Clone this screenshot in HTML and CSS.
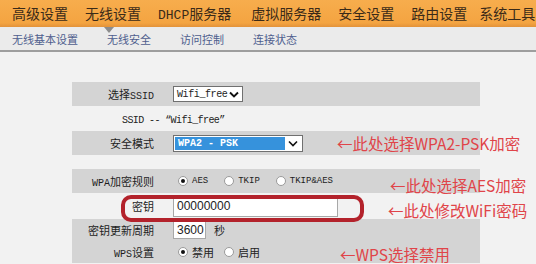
FILE: index.html
```html
<!DOCTYPE html>
<html lang="zh-CN">
<head>
    <meta charset="UTF-8">
    <meta name="viewport" content="width=device-width, initial-scale=1.0">
    <title>无线安全设置</title>
    <link rel="stylesheet" href="styles.css">
</head>
<body>

<div class="topnav">
    <span class="tab">高级设置</span>
    <span class="tab">无线设置</span>
    <span class="tab"><span class="en">DHCP</span>服务器</span>
    <span class="tab">虚拟服务器</span>
    <span class="tab">安全设置</span>
    <span class="tab">路由设置</span>
    <span class="tab">系统工具</span>
</div>

<div class="subnav">
    <span class="pointer"></span>
    <span class="sub">无线基本设置</span>
    <span class="sub">无线安全</span>
    <span class="sub">访问控制</span>
    <span class="sub">连接状态</span>
</div>

<div class="main">
    <div class="panel">
        <div class="row dark">
            <span class="label">选择<span class="en">SSID</span></span>
            <span class="select ssid">Wifi_free
                <svg class="chevron" width="10" height="7" viewBox="0 0 10 7"><path d="M1 1.5 L5 5.5 L9 1.5" fill="none" stroke="#111" stroke-width="1.9"/></svg>
            </span>
        </div>
        <div class="row info">
            <span class="ssid-name">SSID -- “Wifi_free”</span>
        </div>
        <div class="row dark">
            <span class="label">安全模式</span>
            <span class="select mode">
                <span class="mode-value">WPA2 - PSK</span>
                <span class="mode-arrow">
                    <svg width="10" height="7" viewBox="0 0 10 7"><path d="M1 1.5 L5 5.5 L9 1.5" fill="none" stroke="#111" stroke-width="1.6"/></svg>
                </span>
            </span>
        </div>
        <div class="spacer"></div>
        <div class="row dark">
            <span class="label"><span class="en">WPA</span>加密规则</span>
            <span class="options">
                <span class="option"><span class="radio on"></span><span class="en">AES</span></span>
                <span class="option"><span class="radio"></span><span class="en">TKIP</span></span>
                <span class="option"><span class="radio"></span><span class="en">TKIP&amp;AES</span></span>
            </span>
        </div>
        <div class="row key">
            <span class="label">密钥</span>
            <span class="input key-input">00000000</span>
        </div>
        <div class="row dark short">
            <span class="label">密钥更新周期</span>
            <span class="field"><span class="input period">3600</span><span class="unit">秒</span></span>
        </div>
        <div class="row dark short">
            <span class="label"><span class="en">WPS</span>设置</span>
            <span class="options tight">
                <span class="option"><span class="radio on"></span>禁用</span>
                <span class="option"><span class="radio"></span>启用</span>
            </span>
        </div>
    </div>

    <div class="mark"></div>
    <div class="note note-mode">←此处选择WPA2-PSK加密</div>
    <div class="note note-aes">←此处选择AES加密</div>
    <div class="note note-key">←此处修改WiFi密码</div>
    <div class="note note-wps">←WPS选择禁用</div>
</div>

</body>
</html>
```

FILE: styles.css
```css
body {
    margin: 0;
    width: 536px;
    height: 264px;
    overflow: hidden;
    background-color: #f2f2f2;
    font-family: "Noto Sans CJK SC", sans-serif;
    color: #222;
}

.en {
    font-family: "Liberation Mono", monospace;
}

/* orange main menu */
.topnav {
    display: flex;
    gap: 17px;
    height: 27px;
    padding-left: 12px;
    background: linear-gradient(#f7ad4d, #f4a441 85%, #e2923a);
    font-size: 14px;
    line-height: 27px;
    color: #3a2a18;
    white-space: nowrap;
    overflow: hidden;
}

.topnav .en {
    font-size: 13px;
}

.topnav .tab:nth-child(4) {
    margin-left: 3px;
}

.topnav .tab:last-child {
    margin-left: -5px;
}

/* grey sub menu */
.subnav {
    position: relative;
    display: flex;
    gap: 29px;
    height: 23px;
    padding-left: 12px;
    background-color: #ebebeb;
    border-bottom: 2px solid #9e9e9e;
    font-size: 11px;
    line-height: 24px;
    color: #4f5e8e;
}

.subnav .pointer {
    position: absolute;
    left: 104px;
    top: 0;
    border-left: 5px solid transparent;
    border-right: 5px solid transparent;
    border-top: 6px solid #8c8c8c;
}

.main {
    position: relative;
    padding: 30px 0 0 72px;
}

.panel {
    width: 408px;
}

.row {
    display: grid;
    grid-template-columns: 82px 1fr;
    column-gap: 19px;
    align-items: center;
    height: 24px;
}

.row.dark {
    background-color: #d4d4d4;
}

.row.info {
    display: block;
    height: 25px;
}

.row.key {
    height: 26px;
}

.row.short {
    height: 22px;
}

.spacer {
    height: 14px;
}

.label {
    text-align: right;
    font-size: 11px;
    color: #1e1e1e;
}

.label .en {
    font-size: 10px;
}

.ssid-name {
    display: block;
    padding: 9px 0 0 50px;
    font-family: "Liberation Mono", monospace;
    font-size: 10px;
    letter-spacing: -0.6px;
    line-height: 12px;
}

.select {
    display: flex;
    align-items: center;
    box-sizing: border-box;
    height: 16px;
    border: 1px solid #707070;
    background-color: #fff;
}

.select.ssid {
    width: 70px;
    justify-content: space-between;
    padding: 0 3px;
    font-family: "Liberation Mono", monospace;
    font-size: 10px;
    letter-spacing: -0.4px;
}

.select.mode {
    width: 130px;
    height: 17px;
    padding: 1px;
}

.mode-value {
    flex: 1;
    height: 100%;
    padding-left: 3px;
    background-color: #3692dc;
    color: #fff;
    font-family: "Liberation Mono", monospace;
    font-size: 10px;
    line-height: 13px;
    font-weight: bold;
}

.mode-arrow {
    display: flex;
    align-items: center;
    justify-content: center;
    width: 16px;
}

.options {
    display: flex;
    align-items: center;
    gap: 16px;
    padding-left: 5px;
    font-size: 11px;
}

.options.tight {
    gap: 10px;
}

.option {
    display: flex;
    align-items: center;
    gap: 4px;
}

.option .en {
    font-size: 9px;
}

.radio {
    position: relative;
    box-sizing: border-box;
    width: 10px;
    height: 10px;
    border: 1px solid #9a9a9a;
    border-radius: 50%;
    background-color: #fff;
}

.radio.on::after {
    content: "";
    position: absolute;
    left: 2px;
    top: 2px;
    width: 4px;
    height: 4px;
    border-radius: 50%;
    background-color: #111;
}

.input {
    box-sizing: border-box;
    border: 1px solid #a8a8a8;
    background-color: #fff;
    padding-left: 3px;
    font-family: "Liberation Sans", sans-serif;
    font-size: 12px;
    color: #222;
}

.key-input {
    width: 165px;
    height: 21px;
    line-height: 19px;
}

.field {
    display: flex;
    align-items: center;
}

.period {
    width: 33px;
    height: 18px;
    line-height: 16px;
}

.unit {
    margin-left: 8px;
    font-size: 11px;
}

/* hand-drawn red highlight round the key row */
.mark {
    position: absolute;
    left: 121px;
    top: 143px;
    box-sizing: border-box;
    width: 243px;
    height: 27px;
    border: 4px solid #b3222b;
    border-radius: 10px;
}

.note {
    position: absolute;
    font-size: 15.5px;
    line-height: 20px;
    color: #e04449;
    white-space: nowrap;
}

.note-mode {
    left: 337px;
    top: 81px;
}

.note-aes {
    left: 390px;
    top: 123px;
}

.note-key {
    left: 388px;
    top: 148px;
}

.note-wps {
    left: 340px;
    top: 192px;
}
```
